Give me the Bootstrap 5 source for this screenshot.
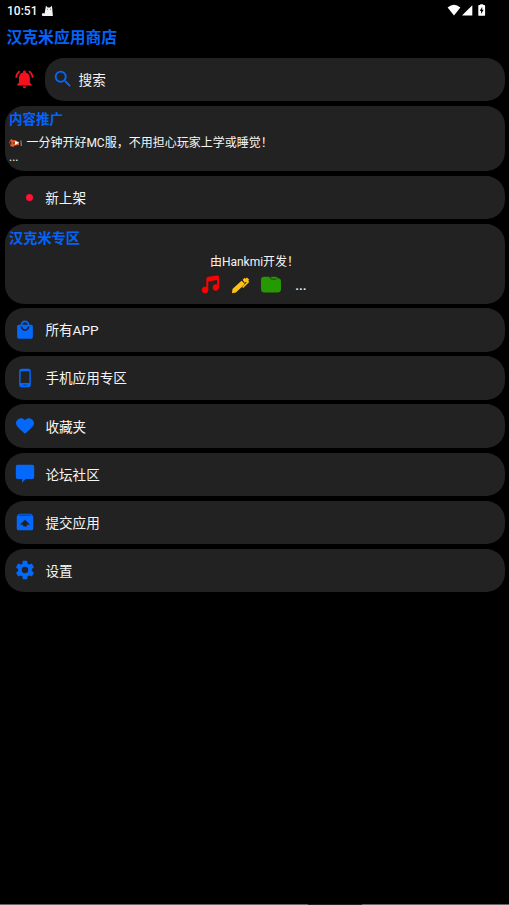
<!DOCTYPE html>
<html lang="zh-CN" data-bs-theme="dark">
<head>
<meta charset="utf-8">
<meta name="viewport" content="width=device-width, initial-scale=1">
<title>汉克米应用商店</title>
<link rel="stylesheet" href="https://cdn.jsdelivr.net/npm/bootstrap@5.3.0/dist/css/bootstrap.min.css">
<style>
body{background:#000;color:#f6f6f6;font-family:Roboto,"Noto Sans CJK SC",sans-serif;font-size:13.6px;line-height:1.2;height:905px;overflow:hidden}
.statusbar{height:20px;padding:1px 23px 0 7px;font-size:12px;font-weight:500}
.statusbar span{padding-top:1px}
.app-title{height:38px;padding:7px 0 0 6.5px;font-size:15.8px;line-height:22.4px;font-weight:700;color:#0364fb;margin:0}
.accent{color:#0364fb}
.panel{background:#222;border-radius:19px}
.stack{padding:0 4.5px;gap:4.7px}
.search-line{height:43.4px}
.bell-slot{width:40.5px}
.menu-row{height:43.4px;padding:1px 0 0 10.5px;color:#f6f6f6;text-decoration:none}
.menu-row svg{width:20px;height:20px;margin:-1px 10.4px 0 0;fill:#0468fb}
.search-box{padding:0 0 0 8px}
.search-box svg{margin:-1px 5.6px 0 0}
.promo{height:65.2px;padding:4.4px 4.5px 0;font-size:12px}
.zone{height:79.6px;padding:4px 4.5px 0;font-size:12px}
.promo h2{font-size:13.5px;line-height:18px;font-weight:700;margin:0 0 7.2px}
.promo .ad-text{margin-left:3.4px}
.ad-more{margin-top:-.5px}
.zone h2{font-size:14.2px;line-height:20px;font-weight:700;margin:0 0 7px}
.zone-icons{margin-top:4.5px;padding-right:3px}
.new-dot{width:7.4px;height:7.4px;margin:-1px 12.2px 0 10.7px;background:#ff1238}
.more{font-size:13.5px;font-weight:500;width:17px;line-height:20px}
.bottom-edge{height:1px}
</style>
</head>
<body class="d-flex flex-column">
<header>
  <div class="statusbar d-flex align-items-center">
    <span>10:51</span>
    <svg class="ms-1" width="13" height="12" viewBox="0 0 13 12" fill="#f4f4f4"><path d="M4.500 3.300 5 .8l1.700 1.600h2.300L10.900.8l.4 3.500.6 6.700H1.500L.8 9.800l.8-1.700 2 .400z"/><path d="M6 4.300h.8M9 4.300h.8" stroke="#333" stroke-width=".8"/></svg>
    <svg class="ms-auto" width="39" height="14" viewBox="0 0 39 14" fill="#fff"><path d="M.6 3.500Q7-1.900 13.400 3.500L7 11.600z"/><path d="M25.300 1.200v10.400H15z"/><path fill-rule="evenodd" d="M32.200 1h1V.2h3V1h1q.9 0 .9.9v9q0 .9-.9.9h-5q-.9 0-.9-.9v-9q0-.9.9-.9zm3 1.800-2.400 4.100h1.300v3l2.500-4.100h-1.400z"/></svg>
  </div>
  <h1 class="app-title">汉克米应用商店</h1>
</header>
<main class="stack d-flex flex-column">
  <div class="search-line d-flex">
    <div class="bell-slot d-flex align-items-center justify-content-center"><svg width="21" height="21" viewBox="0 0 24 24" fill="#f4111f"><path d="M7.58 4.08 6.15 2.65C3.75 4.48 2.17 7.3 2.03 10.5h2c.15-2.65 1.51-4.97 3.55-6.42zM19.97 10.5h2c-.15-3.2-1.73-6.02-4.12-7.85l-1.42 1.43c2.02 1.45 3.39 3.77 3.54 6.42zM18 11c0-3.07-1.64-5.64-4.5-6.32V4c0-.83-.67-1.5-1.5-1.5s-1.5.67-1.5 1.5v.68C7.63 5.36 6 7.92 6 11v5l-2 2v1h16v-1l-2-2zM12 22c1.1 0 2-.9 2-2h-4c0 1.1.9 2 2 2z" transform="translate(-.6 -1) scale(1.040)"/></svg></div>
    <div class="panel menu-row search-box flex-grow-1 d-flex align-items-center"><svg viewBox="0 0 24 24"><path d="M15.5 14h-.79l-.28-.27A6.47 6.47 0 0 0 16 9.5 6.5 6.5 0 1 0 9.5 16c1.61 0 3.09-.59 4.23-1.57l.27.28v.79l5 4.99L20.49 19zm-6 0a4.5 4.5 0 1 1 0-9 4.5 4.5 0 0 1 0 9z" transform="translate(-1.2 -1.2) scale(1.1)"/></svg>搜索</div>
  </div>
  <section class="panel promo">
    <h2 class="accent">内容推广</h2>
    <div class="d-flex align-items-center"><svg width="14" height="10" viewBox="0 0 14 10"><path d="M2 1 4.500 2.200 6 2l4 2v3L6 7.500 4 9 1.500 8 .3 4z" fill="#e85b31"/><path d="m6 3 4 1.700L6 7z" fill="#fff"/><path d="M1 3.500h1.500v3H1zM4.500 4h1v2h-1z" fill="#59251c"/><path d="M11.300 2.500h1.300l.4 5.500h-1.300z" fill="#668c96"/></svg><span class="ad-text">一分钟开好MC服，不用担心玩家上学或睡觉！</span></div>
    <div class="ad-more">...</div>
  </section>
  <a class="panel menu-row d-flex align-items-center"><span class="new-dot rounded-circle"></span>新上架</a>
  <section class="panel zone">
    <h2 class="accent">汉克米专区</h2>
    <div class="text-center">由Hankmi开发！</div>
    <div class="zone-icons d-flex justify-content-center align-items-center gap-2">
      <svg width="22" height="22" viewBox="0 0 22 22"><path d="M6.300 5Q6.500 3 8.500 2.700L17 1.400q2-.2 2 1.600v10.500a3.200 3.200 0 1 1-2-3V6L8.300 7.400V16a3.300 3.300 0 1 1-2-3z" fill="#f00"/></svg>
      <svg width="22" height="22" viewBox="0 0 22 22" fill="#ffc114"><path d="m2.500 15 9-8.300 3.400 3.400-9 8.500-3.900.6z"/><path d="m12.600 5.800 2.100-2 1 1 1.300-1.200 2.200 2.200-1 1.200 1.100 1.100-6.200 6-1.100-1.100 4.600-4.500-.6-.7-1.200 1.100z"/></svg>
      <svg width="22" height="22" viewBox="0 0 22 22"><path d="M1 6q0-3.300 3.200-3.300h4.600l2.200 1.600h6.700q3.300 0 3.300 3.200V15q0 3.500-3.500 3.500h-13Q1 18.500 1 15z" fill="#279900"/><path d="M10.300 2.700h5.200q1.700 0 2.600 1.800h-6z" fill="#279900"/><path d="m9.700 3.500 2 1.800h4.600" fill="none" stroke="#14430b" stroke-width=".8"/></svg>
      <span class="more text-end">...</span>
    </div>
  </section>
  <a class="panel menu-row d-flex align-items-center"><svg viewBox="0 0 24 24"><path fill-rule="evenodd" d="M19 6h-2a5 5 0 0 0-10 0H5c-1.100 0-2 .9-2 2v12c0 1.100.9 2 2 2h14c1.100 0 2-.9 2-2V8c0-1.100-.9-2-2-2zm-7-3c1.660 0 3 1.340 3 3H9c0-1.660 1.340-3 3-3zm0 10a5 5 0 0 1-5-5h2a3 3 0 0 0 6 0h2a5 5 0 0 1-5 5z" transform="translate(-.6 -.6) scale(1.050)"/></svg>所有APP</a>
  <a class="panel menu-row d-flex align-items-center"><svg viewBox="0 0 24 24"><path fill-rule="evenodd" d="M16 1H8a3 3 0 0 0-3 3v16a3 3 0 0 0 3 3h8a3 3 0 0 0 3-3V4a3 3 0 0 0-3-3zm-2 20h-4v-1h4zm3.250-3H6.750V4h10.500z"/></svg>手机应用专区</a>
  <a class="panel menu-row d-flex align-items-center"><svg viewBox="0 0 24 24"><path d="m12 21.350-1.450-1.320C5.400 15.360 1.200 12.280 1.200 8.500 1.200 5.420 4.420 2.700 7.500 2.700c1.740 0 3.410 1.110 4.500 2.390 1.090-1.280 2.760-2.390 4.500-2.390 3.080 0 6.300 2.720 6.300 5.800 0 3.780-4.200 6.860-9.350 11.540z"/></svg>收藏夹</a>
  <a class="panel menu-row d-flex align-items-center"><svg viewBox="0 0 24 24"><path d="M3 1h18q2 0 2 2v13q0 2-2 2h-8l-4.500 4.500V18H3q-2 0-2-2V3q0-2 2-2z"/></svg>论坛社区</a>
  <a class="panel menu-row d-flex align-items-center"><svg viewBox="0 0 24 24"><path fill-rule="evenodd" d="m20.550 5.220-1.390-1.680A1.510 1.510 0 0 0 18 3H6c-.47 0-.88.210-1.150.550L3.460 5.220C3.170 5.570 3 6.010 3 6.500V19a2 2 0 0 0 2 2h14a2 2 0 0 0 2-2V6.500c0-.490-.170-.930-.450-1.280zM12 9.500l5.500 5.500H14v2h-4v-2H6.500zM5.120 5l.820-1h12l.930 1z" transform="translate(-1.200 -1.200) scale(1.100)"/></svg>提交应用</a>
  <a class="panel menu-row d-flex align-items-center"><svg viewBox="0 0 24 24"><path fill-rule="evenodd" d="M19.430 12.980c.040-.320.070-.640.070-.980s-.030-.660-.070-.980l2.110-1.650c.190-.150.240-.420.120-.640l-2-3.460c-.120-.220-.390-.300-.610-.220l-2.490 1c-.520-.400-1.080-.730-1.690-.980l-.380-2.650A.488.488 0 0 0 14 2h-4c-.250 0-.460.180-.490.420l-.380 2.650c-.610.250-1.170.590-1.690.980l-2.490-1c-.230-.090-.490 0-.610.220l-2 3.460c-.130.220-.070.490.120.640l2.110 1.650c-.040.320-.070.650-.070.980s.030.660.070.980l-2.110 1.650c-.190.150-.240.420-.120.640l2 3.460c.120.220.390.300.610.220l2.490-1c.520.400 1.080.730 1.690.980l.380 2.650c.030.240.240.420.490.420h4c.250 0 .460-.180.490-.420l.380-2.650c.610-.250 1.170-.590 1.690-.980l2.490 1c.230.090.490 0 .610-.220l2-3.460c.120-.220.070-.490-.120-.640zM12 15.500a3.500 3.500 0 1 1 0-7 3.500 3.500 0 0 1 0 7z" transform="translate(-1.200 -1.200) scale(1.100)"/></svg>设置</a>
</main>
<svg class="bottom-edge mt-auto w-100" viewBox="0 0 509 1" preserveAspectRatio="none"><path fill="#686464" d="M0 0h308v1H0zM362 0h147v1H362z"/><path fill="#2b2024" d="M308 0h54v1h-54z"/></svg>
<script src="https://cdn.jsdelivr.net/npm/bootstrap@5.3.0/dist/js/bootstrap.bundle.min.js"></script>
</body>
</html>
